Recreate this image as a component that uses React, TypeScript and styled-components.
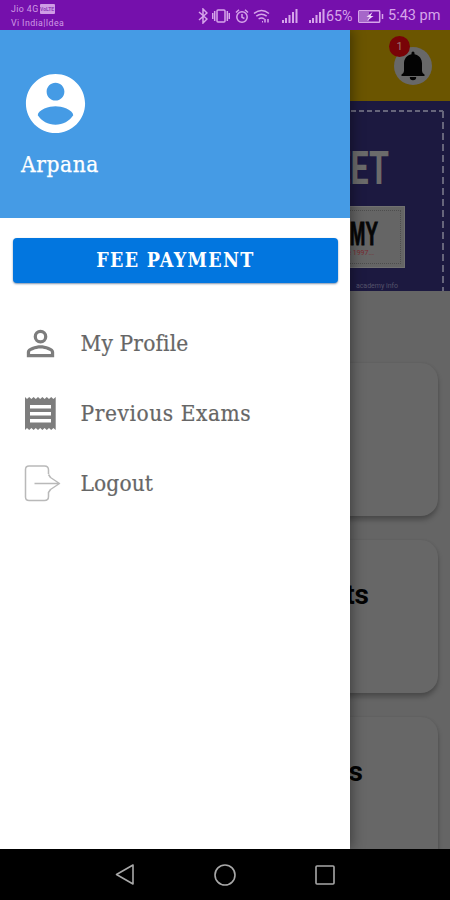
import React from "react";
import styled, { createGlobalStyle } from "styled-components";

const slab = '"Roboto Slab", "DejaVu Serif Condensed", "DejaVu Serif", serif';

const GlobalStyle = createGlobalStyle`
  * { box-sizing: border-box; }
  body { margin: 0; background: #000; font-family: Roboto, sans-serif; }
`;

const Screen = styled.div`
  width: 450px;
  height: 900px;
  display: grid;
  grid-template-rows: 30px 819px 51px;
  overflow: hidden;
`;

const StatusBar = styled.header`
  background: #7510ac;
  color: #d6a5ea;
  display: flex;
  justify-content: space-between;
  padding: 0 9px 0 11px;
`;

const Carriers = styled.div`
  display: flex;
  flex-direction: column;
  padding-top: 2px;
  font-size: 8.8px;
  line-height: 14px;
  letter-spacing: 0.4px;
  color: #cf9be5;
`;

const CarrierLine = styled.span`
  display: flex;
  align-items: center;
  gap: 1px;
  height: 14px;
  white-space: nowrap;
`;

const VolteTag = styled.span`
  width: 15px;
  height: 10px;
  border-radius: 1px;
  background: #cf9be5;
  color: #8c3db8;
  font-size: 5px;
  font-weight: 700;
  letter-spacing: 0;
  line-height: 10px;
  text-align: center;
`;

const StatusIcons = styled.div`
  display: flex;
  align-items: center;
  height: 32px;
`;

const StatusGlyph = styled.svg<{ $gap?: number }>`
  display: block;
  flex: none;
  margin-right: ${(p) => p.$gap ?? 0}px;
  fill: none;
  stroke: currentColor;
  stroke-width: 1.5;
`;

const StatusText = styled.span<{ $width: number; $gap?: number; $size: number }>`
  width: ${(p) => p.$width}px;
  margin-right: ${(p) => p.$gap ?? 0}px;
  font-size: ${(p) => p.$size}px;
  line-height: 20px;
  white-space: nowrap;
`;

const Body = styled.div`
  position: relative;
  overflow: hidden;
`;

const Page = styled.main`
  height: 100%;
  background: #656565;
  display: flex;
  flex-direction: column;
`;

const AppBar = styled.div`
  height: 71px;
  flex: none;
  background: #6b5500;
  display: flex;
  justify-content: flex-end;
  align-items: center;
  padding-right: 18px;
`;

const Bell = styled.div`
  position: relative;
  width: 38px;
  height: 38px;
  border-radius: 50%;
  background: #686868;
  display: grid;
  place-items: center;
`;

const Badge = styled.span`
  position: absolute;
  left: -5px;
  top: -11px;
  width: 21px;
  height: 21px;
  border-radius: 50%;
  background: #790307;
  color: #9a7778;
  font-size: 11px;
  line-height: 21px;
  text-align: center;
`;

const Banner = styled.section`
  height: 190px;
  flex: none;
  background: #1c1940;
  padding: 9px 6px 0;
  overflow: hidden;
`;

const DashedFrame = styled.div`
  position: relative;
  height: 181px;
  display: flex;
  flex-direction: column;
  align-items: flex-end;
`;

const Dashes = styled.svg`
  position: absolute;
  inset: 0;
  fill: none;
  stroke: #66657b;
  stroke-width: 2;
`;

const BannerTitle = styled.div`
  margin: 34px 55px 0 0;
  height: 48px;
  font-size: 46px;
  font-weight: 700;
  line-height: 48px;
  color: #6b6b6b;
  transform: scaleX(0.7);
  transform-origin: right;
`;

const AcademyCard = styled.div`
  width: 250px;
  height: 62px;
  margin: 14px 39px 0 0;
  padding: 3px;
  background: #656565;
  border: 1px solid #717171;
`;

const AcademyInner = styled.div`
  height: 100%;
  border: 1px dotted #4d4d4d;
  display: flex;
  flex-direction: column;
  align-items: flex-end;
  padding-top: 8px;
`;

const AcademyName = styled.span`
  margin-right: 22px;
  height: 28px;
  font-family: "Liberation Sans", sans-serif;
  font-size: 34px;
  font-weight: 700;
  line-height: 28px;
  color: #060606;
  transform: scaleX(0.55);
  transform-origin: right;
  -webkit-text-stroke: 1px #060606;
`;

const AcademyTag = styled.span`
  margin: 2px 26px 0 0;
  font-size: 7px;
  line-height: 8px;
  color: #792a31;
`;

const BannerFoot = styled.span`
  margin: 14px 46px 0 0;
  font-size: 7px;
  line-height: 8px;
  color: #55536b;
`;

const Cards = styled.div`
  display: flex;
  flex-direction: column;
  gap: 24px;
  padding: 72px 12px 0;
`;

const Card = styled.article<{ $inset: number }>`
  height: 153px;
  flex: none;
  border-radius: 17px;
  background: #676767;
  box-shadow: 0 4px 5px rgba(0, 0, 0, 0.26), 0 0 3px rgba(0, 0, 0, 0.08);
  padding: 38px ${(p) => p.$inset}px 0 0;
  text-align: right;
  font-size: 28px;
  font-weight: 700;
  line-height: 34px;
  color: #030303;
`;

const Drawer = styled.aside`
  position: absolute;
  top: 0;
  left: 0;
  width: 350px;
  height: 100%;
  background: #fff;
  box-shadow: 2px 0 12px rgba(0, 0, 0, 0.4);
`;

const Profile = styled.div`
  height: 188px;
  background: #459be5;
  padding: 38px 21px 0;
  display: flex;
  flex-direction: column;
`;

const Avatar = styled.svg`
  display: block;
  width: 71px;
  height: 71px;
  margin-left: -1px;
  fill: #fff;
`;

const UserName = styled.span`
  margin-top: 11px;
  font-family: ${slab};
  font-size: 22.5px;
  line-height: 28px;
  letter-spacing: 0.6px;
  color: #fff;
  -webkit-text-stroke: 0.25px #fff;
`;

const PayButton = styled.button`
  display: block;
  width: 325px;
  height: 45px;
  margin: 20px 0 0 13px;
  padding: 1px 0 0;
  border: 0;
  border-radius: 4px;
  background: #0276df;
  box-shadow: 0 1px 2px rgba(0, 40, 90, 0.5);
  color: #fff;
  font-family: ${slab};
  font-size: 19.5px;
  font-weight: 700;
  line-height: 44px;
  letter-spacing: 1.3px;
  white-space: nowrap;
`;

const Menu = styled.nav`
  display: flex;
  flex-direction: column;
  margin-top: 25px;
`;

const MenuItem = styled.a`
  height: 70px;
  padding-left: 20px;
  display: flex;
  align-items: center;
  gap: 19.5px;
`;

const MenuIcon = styled.svg`
  display: block;
  width: 41px;
  height: 41px;
  flex: none;
  fill: #7d7d7d;
`;

const MenuLabel = styled.span<{ $spacing: number }>`
  font-family: ${slab};
  font-size: 22.5px;
  line-height: 30px;
  letter-spacing: ${(p) => p.$spacing}px;
  color: #666;
  white-space: nowrap;
  -webkit-text-stroke: 0.2px #666;
`;

const NavBar = styled.footer`
  background: #000;
  display: flex;
  justify-content: center;
  align-items: center;
  gap: 76px;
`;

const NavGlyph = styled.svg`
  width: 24px;
  height: 24px;
  fill: none;
  stroke: #a8a8a8;
  stroke-width: 1.6;
  stroke-linejoin: round;
`;

const Signal = ({ gap }: { gap: number }) => (
  <StatusGlyph width="16" height="14" viewBox="0 0 16 14" $gap={gap}>
    <path d="M1 11v3M4 9v5M7.5 6v8M11 3v11M14.5 0v14" strokeWidth="2" />
  </StatusGlyph>
);

export default function App() {
  return (
    <>
      <GlobalStyle />
      <Screen>
        <StatusBar>
          <Carriers>
            <CarrierLine>Jio 4G <VolteTag>VoLTE</VolteTag></CarrierLine>
            <CarrierLine>Vi India|Idea</CarrierLine>
          </Carriers>
          <StatusIcons>
            <StatusGlyph width="10" height="16" viewBox="0 0 10 16" $gap={4}>
              <path d="M1 4l8 7-4 4V1l4 4-8 7" />
            </StatusGlyph>
            <StatusGlyph width="18" height="14" viewBox="0 0 18 14" $gap={5}>
              <rect x="5" y="1" width="8" height="12" rx="1" />
              <path d="M2.700 2v10M.7 4v6M15.300 2v10M17.300 4v6" />
            </StatusGlyph>
            <StatusGlyph width="14" height="14" viewBox="0 0 14 14" $gap={4}>
              <circle cx="7" cy="8" r="5.2" />
              <path d="M1 3.500l3-2.700M13 3.500L10 .8M7 5v3.300l2.400 1.200" />
            </StatusGlyph>
            <StatusGlyph width="17" height="14" viewBox="0 0 17 14" $gap={12}>
              <path d="M1 4.500q7.500-6 15 0M3.300 7.200q5.200-4 10.400 0M5.600 10q2.900-2 5.800 0M9 12.800h1M12 10v3.500M15 10v3.500" />
            </StatusGlyph>
            <Signal gap={11} />
            <Signal gap={1} />
            <StatusText $width={28} $gap={4} $size={14.3}>65%</StatusText>
            <StatusGlyph width="26" height="13" viewBox="0 0 26 13" $gap={4}>
              <rect x=".7" y=".7" width="21" height="11.6" rx="1" />
              <path d="M1 1h10v11H1z" fill="#a667c9" stroke="none" />
              <path d="M24.500 4v5" />
              <path d="M14.500 2l-6 5h3L9 11l6.500-5h-3z" fill="#eed9f6" stroke="none" />
            </StatusGlyph>
            <StatusText $width={53} $size={14.5}>5:43 pm</StatusText>
          </StatusIcons>
        </StatusBar>

        <Body>
          <Page>
            <AppBar>
              <Bell>
                <svg width="26" height="30" viewBox="0 0 26 30" fill="#030303">
                  <path d="M11.500 2a1.500 1.500 0 0 1 3 0v1.200C19.500 4.300 22 8 22 12.500V20q0 2 2.500 3.500V25h-23v-1.500Q4 22 4 20v-7.500C4 8 6.500 4.300 11.500 3.200z" />
                  <path d="M9.800 26h6.400a3.200 3.200 0 0 1-6.400 0z" />
                </svg>
                <Badge>1</Badge>
              </Bell>
            </AppBar>
            <Banner>
              <DashedFrame>
                <Dashes width="438" height="181" viewBox="0 0 438 181">
                  <path d="M1 1H437" strokeDasharray="5 3" />
                  <path d="M437 1V181" strokeDasharray="7 4" />
                </Dashes>
                <BannerTitle>MEET</BannerTitle>
                <AcademyCard>
                  <AcademyInner>
                    <AcademyName>ACADEMY</AcademyName>
                    <AcademyTag>Since 1997...</AcademyTag>
                  </AcademyInner>
                </AcademyCard>
                <BannerFoot>academy info</BannerFoot>
              </DashedFrame>
            </Banner>
            <Cards>
              <Card $inset={69} />
              <Card $inset={69}>Results</Card>
              <Card $inset={75}>Exams</Card>
            </Cards>
          </Page>

          <Drawer>
            <Profile>
              <Avatar viewBox="0 0 24 24">
                <path d="M12 2C6.480 2 2 6.480 2 12s4.480 10 10 10 10-4.480 10-10S17.520 2 12 2zm0 3c1.660 0 3 1.340 3 3s-1.340 3-3 3-3-1.340-3-3 1.340-3 3-3zm0 14.200c-2.500 0-4.710-1.280-6-3.220.03-1.990 4-3.080 6-3.080 1.990 0 5.970 1.090 6 3.080-1.290 1.940-3.500 3.220-6 3.220z" />
              </Avatar>
              <UserName>Arpana</UserName>
            </Profile>
            <PayButton>FEE PAYMENT</PayButton>
            <Menu>
              <MenuItem>
                <MenuIcon viewBox="0 0 24 24">
                  <path d="M12 5.900a2.100 2.100 0 1 1 0 4.200 2.100 2.100 0 0 1 0-4.200m0 9c2.970 0 6.100 1.460 6.100 2.100v1.100H5.900V17c0-.64 3.130-2.100 6.100-2.100M12 4a4 4 0 1 0 0 8 4 4 0 0 0 0-8zm0 9c-2.670 0-8 1.340-8 4v3h16v-3c0-2.660-5.330-4-8-4z" />
                </MenuIcon>
                <MenuLabel $spacing={0.15}>My Profile</MenuLabel>
              </MenuItem>
              <MenuItem>
                <MenuIcon viewBox="0 0 41 41">
                  <path
                    fillRule="evenodd"
                    d="M5 4l2 2 2.200-2 2.200 2 2.200-2 2.200 2 2.200-2 2.200 2 2.200-2 2.200 2 2.200-2 2.200 2 2.200-2 2.200 2 2.300-2v33l-2.300-2-2.200 2-2.200-2-2.200 2-2.200-2-2.200 2-2.200-2-2.200 2-2.200-2-2.200 2-2.200-2-2.200 2-2.200-2-2 2zM10 12v3.500h21V12zm0 7v3.500h21V19zm0 7v3.500h21V26z"
                  />
                </MenuIcon>
                <MenuLabel $spacing={0.55}>Previous Exams</MenuLabel>
              </MenuItem>
              <MenuItem>
                <MenuIcon viewBox="0 0 41 41">
                  <path
                    d="M28.500 11V7q0-4-4-4H9Q5.500 3 5.500 6.500V34q0 3.500 3.500 3.500h15.500q4 0 4-4V29M14.500 20.500H39M28.500 11.500l2 3L39.500 20.500L30.500 26.500l-2 3"
                    fill="none"
                    stroke="#b9b9b9"
                    strokeWidth="1.5"
                    strokeLinejoin="round"
                  />
                </MenuIcon>
                <MenuLabel $spacing={0.1}>Logout</MenuLabel>
              </MenuItem>
            </Menu>
          </Drawer>
        </Body>

        <NavBar>
          <NavGlyph viewBox="0 0 24 24"><path d="M20 2v19L3.500 11.500z" /></NavGlyph>
          <NavGlyph viewBox="0 0 24 24"><circle cx="12" cy="12" r="10" /></NavGlyph>
          <NavGlyph viewBox="0 0 24 24"><rect x="3" y="3" width="18" height="18" rx="1" /></NavGlyph>
        </NavBar>
      </Screen>
    </>
  );
}
